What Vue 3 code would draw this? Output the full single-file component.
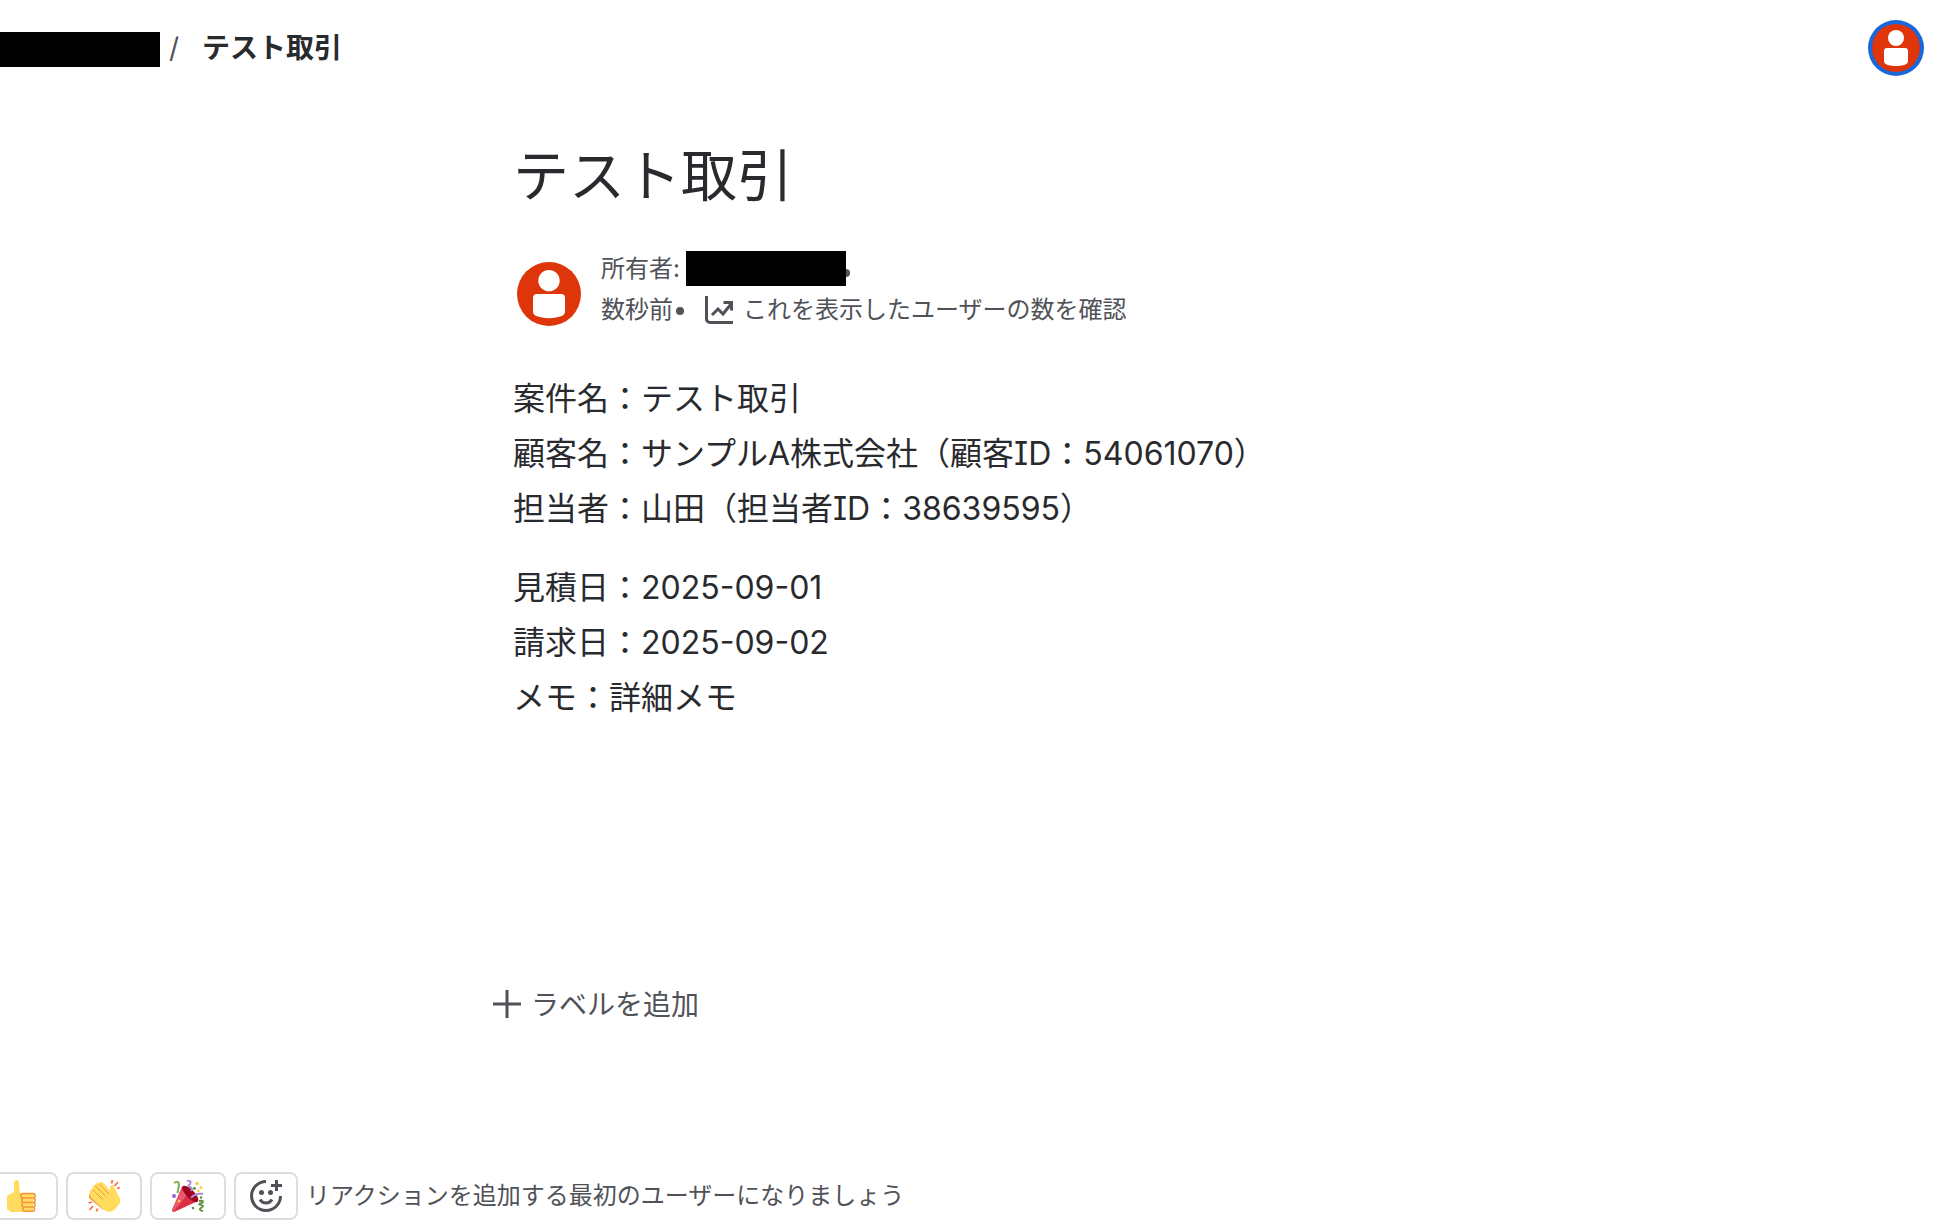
<script setup>
	import {ref} from 'vue'

	const title = 'テスト取引'
	const groups = [
		[
			'案件名：テスト取引',
			'顧客名：サンプルA株式会社（顧客ID：54061070）',
			'担当者：山田（担当者ID：38639595）'
		],
		[
			'見積日：2025-09-01',
			'請求日：2025-09-02',
			'メモ：詳細メモ'
		]
	]
	const picked = ref('')

	function react(name){
		picked.value = picked.value == name ? '' : name;
	}
</script>

<template>
	<div class="page">
		<header class="topbar">
			<nav class="crumbs">
				<span class="mask"></span>
				<span class="slash">/</span>
				<strong>{{ title }}</strong>
			</nav>
			<button class="account" aria-label="アカウント">
				<svg class="avatar" viewBox="0 0 48 48">
					<circle cx="24" cy="24" r="24" fill="#de350b"/>
					<circle cx="24" cy="14" r="8" fill="#fff"/>
					<path d="M12 27a3 3 0 0 1 3-3h18a3 3 0 0 1 3 3v10c0 2-1 3-3 3.700Q24 43.500 15 40.700C13 40 12 39 12 37z" fill="#fff"/>
				</svg>
			</button>
		</header>

		<main class="content">
			<article>
				<h1>{{ title }}</h1>
				<div class="byline">
					<svg class="avatar large" viewBox="0 0 48 48">
						<circle cx="24" cy="24" r="24" fill="#de350b"/>
						<circle cx="24" cy="14" r="8" fill="#fff"/>
						<path d="M12 27a3 3 0 0 1 3-3h18a3 3 0 0 1 3 3v10c0 2-1 3-3 3.700Q24 43.500 15 40.700C13 40 12 39 12 37z" fill="#fff"/>
					</svg>
					<div>
						<div class="line">
							<span>所有者:</span>
							<span class="mask owner"></span>
							<i class="dot tucked"></i>
						</div>
						<div class="line">
							<span>数秒前</span>
							<i class="dot"></i>
							<a class="views" href="#">
								<svg viewBox="0 0 28 28" fill="none" stroke="#505258" stroke-width="3">
									<path d="M1.500 0v23a3.500 3.500 0 0 0 3.500 3.500h23"/>
									<path d="M7 19l6-6 5 5 8-10M18.500 6.500H26.500v8"/>
								</svg>
								<span>これを表示したユーザーの数を確認</span>
							</a>
						</div>
					</div>
				</div>
				<div class="body">
					<p v-for="(lines, i) in groups" :key="i">
						<span v-for="line in lines" :key="line">{{ line }}</span>
					</p>
				</div>
			</article>

			<button class="add-label">
				<svg viewBox="0 0 28 28" stroke="#505258" stroke-width="3">
					<path d="M14 0v28M0 14h28"/>
				</svg>
				<span>ラベルを追加</span>
			</button>
		</main>

		<footer class="reactions">
			<button aria-label="いいね" @click="react('thumb')">
				<svg viewBox="0 0 32 32">
					<path d="M3 17q0-1 1-2l6-3V3c0-4 5-4 5 0l1 10h12q2 0 2 3l-1 16H7l-4-3z" fill="#ffdc5d"/>
					<path d="M20 13.500h9a2.300 2.300 0 0 1 0 4.600h-9a2.200 2.200 0 0 0 0 4.500h9a2.200 2.200 0 0 1 0 4.500h-8a2 2 0 0 0 0 4.200h7.500a2.100 2.100 0 0 0 0-4.200M20 18h-1a2 2 0 0 1 0-4.500h3M29 18.100a2.200 2.200 0 0 1 0 4.500M21 27h-1a2 2 0 0 1 0-4.400" fill="none" stroke="#ef9645" stroke-width="1.500"/>
				</svg>
			</button>
			<button aria-label="拍手" @click="react('clap')">
				<svg viewBox="0 0 32 32">
					<path d="M1 15q0-2 2-2l14 17-3-1L1 18z" fill="#ef9645"/>
					<path d="M2 12.500Q1 9 4.500 9.500 3.500 5.500 7 5.500 7.500 2 11 3.500 13 0 16 3.500l6.500 7.500q-1.500-5 1.500-6 2 0 2.500 3l5.500 10.500v4.500L26.500 30l-5 2-6-2L4 18.500Q0 15 2 12.500z" fill="#ffdc5d"/>
					<path d="M4.500 9.500L15 20M7 5.500L18 16.500M11 3.500L21 14" fill="none" stroke="#ef9645" stroke-width="1"/>
					<path d="M24.500 0l-1 3.500M30 2l-3.500 4M32 7.500l-3 1M4 22l-3.500 1M5 26l-3.500 4M9.500 28.500l-1 3" fill="none" stroke="#fa743e" stroke-width="1.800"/>
				</svg>
			</button>
			<button aria-label="お祝い" @click="react('party')">
				<svg viewBox="0 0 32 32">
					<path d="M10 7L0 30q0 2 2 2l24-11z" fill="#dd2e44"/>
					<path d="M10 7L0 30l2 1L15 15z" fill="#ea596e"/>
					<path d="M11 6c3-1 8 2 12 7s4 8 2 9-7-2-11-7-5-8-3-9z" fill="#a0041e"/>
					<circle cx="7" cy="21" r="1.300" fill="#ffcc4d"/>
					<path d="M2 3q5-3 5 2L5.500 13" fill="none" stroke="#77b255" stroke-width="2"/>
					<path d="M15 1q5-1 3 3-3 2 0 3 3 1 1 4M19 18q4-5 12-4" fill="none" stroke="#aa8dd8" stroke-width="2"/>
					<path d="M27 21q6-1 3 2-5 1-1 2 4 1 0 3-3 2 2 3" fill="none" stroke="#5c913b" stroke-width="1.800"/>
					<circle cx="2" cy="16" r="2" fill="#9266cc"/>
					<circle cx="25" cy="3.500" r="1.800" fill="#ffcc4d"/>
					<circle cx="29" cy="7.500" r="1.500" fill="#ffcc4d"/>
					<circle cx="26.500" cy="11" r="1.400" fill="#ffcc4d"/>
					<circle cx="22.500" cy="8.500" r="1.400" fill="#5c913b"/>
					<circle cx="29" cy="17.500" r="1.300" fill="#5c913b"/>
					<circle cx="21" cy="28" r="1.300" fill="#5c913b"/>
				</svg>
			</button>
			<button class="more" aria-label="リアクションを追加" @click="react('other')">
				<svg viewBox="0 0 32 32" fill="none" stroke="#505258" stroke-width="3">
					<path d="M16 1.500a14.500 14.500 0 1 0 14.500 14.500M26.500 0v11M21 5.500h11M10 19.500q2 3.500 6 3.500t6-3.500"/>
					<circle cx="11.500" cy="12.500" r="2.500" fill="#505258" stroke="none"/>
					<circle cx="20.500" cy="12.500" r="2.500" fill="#505258" stroke="none"/>
				</svg>
			</button>
			<span>リアクションを追加する最初のユーザーになりましょう</span>
		</footer>
	</div>
</template>

<style>
	body{
		background: #fff;
	}
</style>

<style scoped>
	.page{
		min-height: 100vh;
		display: flex;
		flex-direction: column;
		overflow: hidden;
		color: #292a2e;
		font-family: Inter, "Noto Sans CJK JP", sans-serif;
	}

	button{
		margin: 0;
		padding: 0;
		border: none;
		background: none;
		font: inherit;
		color: inherit;
		cursor: pointer;
	}

	svg{
		display: block;
		flex: none;
	}

	.topbar{
		display: flex;
		align-items: center;
		justify-content: space-between;
		height: 96px;
		padding-right: 18px;
	}

	.crumbs{
		display: flex;
		align-items: center;
		font-size: 28px;
		line-height: 40px;
	}

	.slash{
		margin: 0 23px 0 9px;
		color: #505258;
	}

	.mask{
		width: 160px;
		height: 35px;
		background: #000;
	}
	.crumbs .mask{margin-top: 2px;}

	.account{
		padding: 4px;
		border-radius: 50%;
		background: #1868db;
	}

	.avatar{
		width: 48px;
		height: 48px;
	}

	.content{
		flex: 1;
		display: flex;
		flex-direction: column;
		box-sizing: border-box;
		width: 100%;
		max-width: 956px;
		margin: 0 auto;
		padding: 48px 0 140px;
	}

	article{
		padding: 0 20px;
	}

	h1{
		margin: 0;
		font-size: 56px;
		font-weight: 400;
		line-height: 64px;
	}

	.byline{
		display: flex;
		align-items: flex-end;
		gap: 20px;
		margin-top: 40px;
		padding-left: 4px;
		color: #505258;
		font-size: 24px;
		line-height: 41px;
	}

	.avatar.large{
		width: 64px;
		height: 64px;
		padding-bottom: 4px;
	}

	.line{
		display: flex;
		align-items: center;
	}

	.owner{
		position: relative;
		z-index: 1;
		margin-left: 6px;
	}

	.dot{
		width: 8px;
		height: 8px;
		margin: 3px 0 0 3px;
		border-radius: 50%;
		background: #505258;
	}
	.dot.tucked{margin: 8px 0 0 -4px;}

	.views{
		display: flex;
		align-items: center;
		gap: 10px;
		margin-left: 21px;
		color: inherit;
		text-decoration: none;
	}
	.views svg{width: 28px; height: 28px;}

	.body{
		margin-top: 41px;
		font-size: 32px;
		line-height: 55px;
		font-feature-settings: "cv08";
	}

	.body p{
		margin: 0 0 24px;
	}

	.body span{
		display: block;
	}

	.add-label{
		display: flex;
		align-items: center;
		align-self: flex-start;
		gap: 10px;
		height: 56px;
		margin-top: auto;
		color: #505258;
		font-size: 28px;
	}
	.add-label svg{width: 28px; height: 28px;}
	.add-label span{padding-bottom: 3px;}

	.reactions{
		display: flex;
		align-items: center;
		gap: 8px;
		margin-left: -18px;
		padding-bottom: 12px;
		color: #505258;
		font-size: 24px;
		line-height: 32px;
	}

	.reactions button{
		display: flex;
		align-items: center;
		justify-content: center;
		box-sizing: border-box;
		width: 76px;
		height: 48px;
		border: 2px solid #dddee1;
		border-radius: 8px;
	}
	.reactions .more{width: 64px;}
	.reactions svg{width: 32px; height: 32px;}
</style>
